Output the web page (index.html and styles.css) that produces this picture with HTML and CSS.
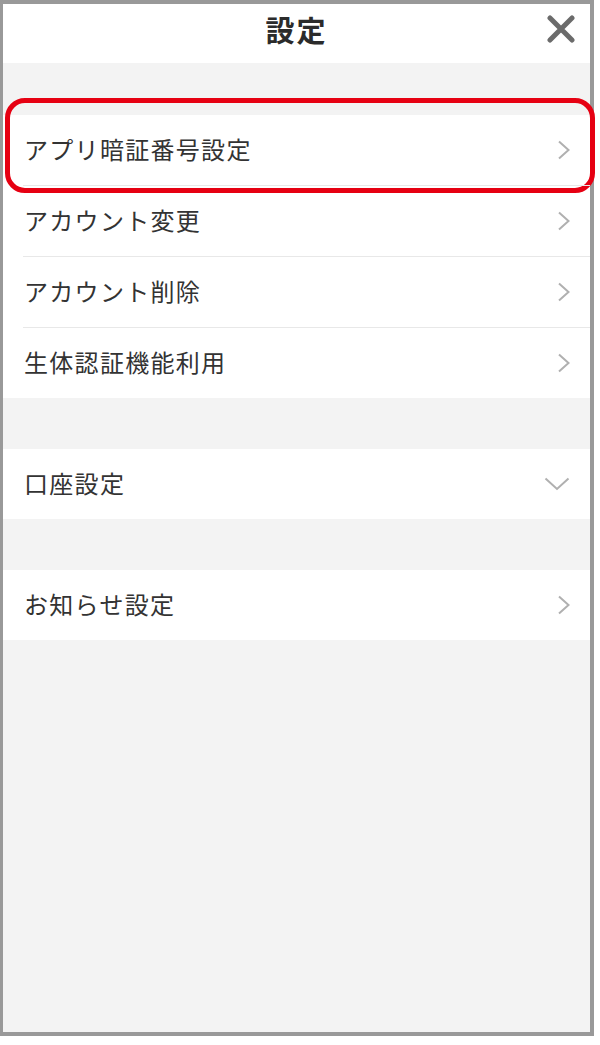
FILE: index.html
```html
<!DOCTYPE html>
<html lang="ja">
<head>
  <meta charset="UTF-8" />
  <meta name="viewport" content="width=device-width, initial-scale=1.0" />
  <title>設定</title>
  <link rel="stylesheet" href="styles.css">
</head>
<body>
  <div class="phone">
    <header class="header">
      <h1>設定</h1>
      <button class="close" aria-label="閉じる">
        <svg width="28" height="28" viewBox="0 0 28 28">
          <path d="M3 3 L25 25 M25 3 L3 25" stroke="#6b6b6b" stroke-width="5" stroke-linecap="round"/>
        </svg>
      </button>
    </header>

    <div class="spacer first"></div>

    <ul class="group">
      <li class="row highlighted">
        <div class="row-inner">
          <span>アプリ暗証番号設定</span>
          <svg class="chev" width="14" height="20" viewBox="0 0 14 20"><polyline points="2,1.5 11.5,10 2,18.5"/></svg>
        </div>
        <div class="mark"></div>
      </li>
      <li class="row">
        <div class="row-inner">
          <span>アカウント変更</span>
          <svg class="chev" width="14" height="20" viewBox="0 0 14 20"><polyline points="2,1.5 11.5,10 2,18.5"/></svg>
        </div>
      </li>
      <li class="row">
        <div class="row-inner">
          <span>アカウント削除</span>
          <svg class="chev" width="14" height="20" viewBox="0 0 14 20"><polyline points="2,1.5 11.5,10 2,18.5"/></svg>
        </div>
      </li>
      <li class="row">
        <div class="row-inner">
          <span>生体認証機能利用</span>
          <svg class="chev" width="14" height="20" viewBox="0 0 14 20"><polyline points="2,1.5 11.5,10 2,18.5"/></svg>
        </div>
      </li>
    </ul>

    <div class="spacer"></div>

    <ul class="group">
      <li class="row">
        <div class="row-inner">
          <span>口座設定</span>
          <svg class="chev down" width="26" height="14" viewBox="0 0 26 14"><polyline points="1.5,1.5 13,12 24.5,1.5"/></svg>
        </div>
      </li>
    </ul>

    <div class="spacer"></div>

    <ul class="group">
      <li class="row">
        <div class="row-inner">
          <span>お知らせ設定</span>
          <svg class="chev" width="14" height="20" viewBox="0 0 14 20"><polyline points="2,1.5 11.5,10 2,18.5"/></svg>
        </div>
      </li>
    </ul>
  </div>
</body>
</html>
```

FILE: styles.css
```css
body {
  margin: 0;
  background: white;
  font-family: "Noto Sans CJK JP", "Noto Sans", sans-serif;
  color: #333;
}
.phone {
  width: 594px;
  height: 1036px;
  box-sizing: border-box;
  border: 4px solid #999;
  border-left-width: 3px;
  background: #f3f3f3;
  display: flex;
  flex-direction: column;
}
.header {
  position: relative;
  box-sizing: border-box;
  height: 59px;
  padding-bottom: 8px;
  background: white;
  display: flex;
  align-items: center;
  justify-content: center;
}
.header h1 {
  margin: 0;
  font-size: 29px;
  font-weight: bold;
  color: #2b2b2b;
  letter-spacing: 2px;
  line-height: 1;
}
.close {
  position: absolute;
  right: 15px;
  top: 11px;
  padding: 0;
  border: none;
  background: none;
  line-height: 0;
}
.spacer {
  height: 51px;
}
.spacer.first {
  height: 52px;
}
.group {
  list-style: none;
  margin: 0;
  padding: 0;
  background: white;
}
.row {
  position: relative;
  height: 70px;
  padding-left: 20px;
  display: flex;
}
.row + .row {
  height: 71px;
}
.row-inner {
  flex: 1;
  display: flex;
  align-items: center;
  justify-content: space-between;
  padding-left: 1px;
  padding-right: 19px;
  font-size: 24px;
  letter-spacing: 1.3px;
}
.row-inner span {
  padding-bottom: 4px;
}
.row + .row .row-inner {
  border-top: 1px solid #e8e8e8;
}
.chev {
  fill: none;
  stroke: #b0b0b0;
  stroke-width: 2;
}
.chev.down {
  margin-right: 1px;
}
.mark {
  position: absolute;
  left: 2px;
  right: -5px;
  top: -17px;
  bottom: -8px;
  border: 5px solid #e60012;
  border-radius: 20px;
  pointer-events: none;
}
```
